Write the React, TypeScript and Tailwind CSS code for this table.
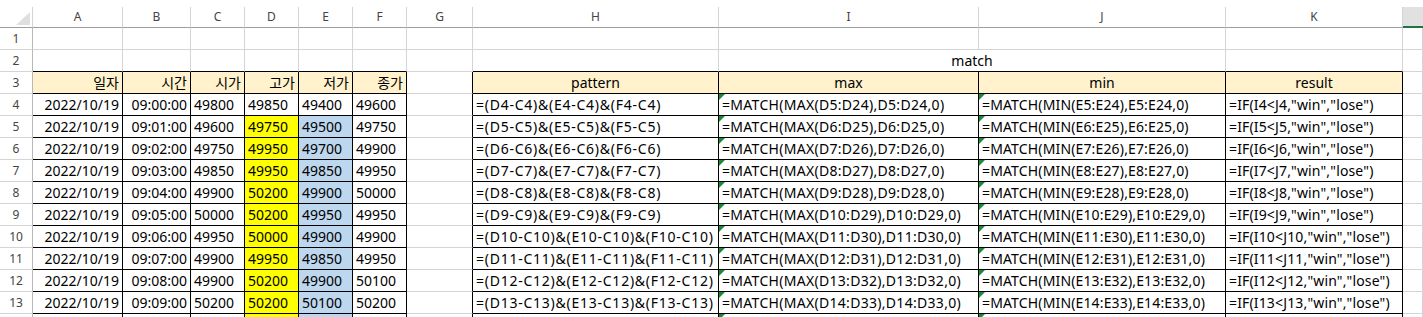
import React from "react";

const COLS = ["", "A", "B", "C", "D", "E", "F", "G", "H", "I", "J", "K", ""];

type Row = { d: string; t: string; o: string; h: string; l: string; c: string };
const data: Row[] = [
  { d: "2022/10/19", t: "09:00:00", o: "49800", h: "49850", l: "49400", c: "49600" },
  { d: "2022/10/19", t: "09:01:00", o: "49600", h: "49750", l: "49500", c: "49750" },
  { d: "2022/10/19", t: "09:02:00", o: "49750", h: "49950", l: "49700", c: "49900" },
  { d: "2022/10/19", t: "09:03:00", o: "49850", h: "49950", l: "49850", c: "49950" },
  { d: "2022/10/19", t: "09:04:00", o: "49900", h: "50200", l: "49900", c: "50000" },
  { d: "2022/10/19", t: "09:05:00", o: "50000", h: "50200", l: "49950", c: "49950" },
  { d: "2022/10/19", t: "09:06:00", o: "49950", h: "50000", l: "49900", c: "49900" },
  { d: "2022/10/19", t: "09:07:00", o: "49900", h: "49950", l: "49850", c: "49950" },
  { d: "2022/10/19", t: "09:08:00", o: "49900", h: "50200", l: "49900", c: "50100" },
  { d: "2022/10/19", t: "09:09:00", o: "50200", h: "50200", l: "50100", c: "50200" },
];

function inTable(r: number, c: number) {
  if (r < 3 || r > 15) return false;
  return (c >= 1 && c <= 6) || (c >= 8 && c <= 11);
}

type CellInfo = { text: string; align: "l" | "r" | "c"; fill: string; tri?: boolean };

function cellInfo(r: number, c: number): CellInfo {
  const empty: CellInfo = { text: "", align: "l", fill: "bg-white" };
  if (r === 3) {
    const heads: Record<number, string> = { 1: "일자", 2: "시간", 3: "시가", 4: "고가", 5: "저가", 6: "종가", 8: "pattern", 9: "max", 10: "min", 11: "result" };
    if (heads[c] !== undefined) return { text: heads[c], align: c <= 6 ? "r" : "c", fill: "bg-[#fff2cc]" };
    return empty;
  }
  if (r >= 4) {
    const d = data[r - 4];
    const yellow = c === 4 && r >= 5;
    const blue = c === 5 && r >= 5;
    const fill = yellow ? "bg-[#ffff00]" : blue ? "bg-[#bdd7ee]" : "bg-white";
    const tri = (c === 9 || c === 10) && r >= 4;
    if (!d) return { text: "", align: "l", fill, tri };
    switch (c) {
      case 1: return { text: d.d, align: "r", fill };
      case 2: return { text: d.t, align: "r", fill };
      case 3: return { text: d.o, align: "l", fill };
      case 4: return { text: d.h, align: "l", fill };
      case 5: return { text: d.l, align: "l", fill };
      case 6: return { text: d.c, align: "l", fill };
      case 8: return { text: `=(D${r}-C${r})&(E${r}-C${r})&(F${r}-C${r})`, align: "l", fill };
      case 9: return { text: `=MATCH(MAX(D${r + 1}:D${r + 20}),D${r + 1}:D${r + 20},0)`, align: "l", fill, tri };
      case 10: return { text: `=MATCH(MIN(E${r + 1}:E${r + 20}),E${r + 1}:E${r + 20},0)`, align: "l", fill, tri };
      case 11: return { text: `=IF(I${r}<J${r},"win","lose")`, align: "l", fill };
    }
    return { ...empty, fill };
  }
  return empty;
}

function trackingFor(r: number, c: number) {
  if (r < 4) return "";
  if (c === 8) return "tracking-[0.75px]";
  if (c === 9) return "tracking-[0.3px]";
  if (c === 10) return "tracking-[0.15px]";
  if (c === 11) return "tracking-[0.15px]";
  return "";
}

export default function App() {
  const rows = [1, 2, 3, 4, 5, 6, 7, 8, 9, 10, 11, 12, 13, 14];
  return (
    <div
      className="w-[1423px] h-[317px] overflow-hidden bg-white"
      style={{ fontFamily: '"Noto Sans", "Noto Sans CJK KR", sans-serif' }}
    >
      <div className="h-[7px] bg-white" />
      <div className="grid grid-cols-[33px_90px_68px_54px_54px_54px_54px_66px_246px_260px_247px_177px_20px] auto-rows-[22px] [grid-template-rows:21px]">
        {COLS.map((name, c) => {
          if (c === 0) {
            return (
              <div key={`h${c}`} className="relative h-[21px] border-r border-b border-r-[#d4d4d4] border-b-[#9e9e9e] bg-white">
                <svg className="absolute left-0 top-0" width="33" height="21" viewBox="0 0 33 21">
                  <polygon points="16,18 30,18 30,5" fill="#dfdfdf" />
                </svg>
              </div>
            );
          }
          if (c === 12) {
            return <div key={`h${c}`} className="h-[21px] border-b-2 border-b-[#217346] bg-[#e1e1e1]" />;
          }
          return (
            <div
              key={`h${c}`}
              className="h-[21px] flex items-center justify-center border-r border-b border-r-[#d4d4d4] border-b-[#9e9e9e] text-[12px] text-[#444] bg-white"
            >
              {name}
            </div>
          );
        })}
        {rows.map((r) =>
          Array.from({ length: 13 }).map((_, c) => {
            if (c === 0) {
              return (
                <div
                  key={`${r}-${c}`}
                  className="h-[22px] flex items-center justify-center border-r border-b border-r-[#b8b8b8] border-b-[#d4d4d4] text-[12px] text-[#444] bg-white"
                >
                  {r < 14 ? r : ""}
                </div>
              );
            }
            if (r === 2 && c === 10) return null;
            if (r === 2 && c === 9) {
              return (
                <div
                  key={`${r}-${c}`}
                  className="col-span-2 h-[22px] flex items-center justify-center border-r border-b border-r-[#d4d4d4] border-b-black text-[14px] text-black bg-white"
                >
                  match
                </div>
              );
            }
            const info = cellInfo(r, c);
            const rightBlack = inTable(r, c) || inTable(r, c + 1);
            const bottomBlack = inTable(r, c) || inTable(r + 1, c);
            const rb = rightBlack ? "border-r-black" : "border-r-[#d4d4d4]";
            const bb = bottomBlack ? "border-b-black" : "border-b-[#d4d4d4]";
            const al =
              info.align === "r" ? "justify-end pr-[3px]" : info.align === "c" ? "justify-center" : "justify-start pl-[3px]";
            return (
              <div
                key={`${r}-${c}`}
                className={`relative h-[22px] flex items-center overflow-hidden whitespace-nowrap border-r border-b ${rb} ${bb} ${al} ${info.fill} ${trackingFor(r, c)} text-[14px] text-black`}
              >
                {info.tri && (
                  <span className="absolute left-0 top-0 w-0 h-0 border-t-[6px] border-t-[#1a8a3a] border-r-[6px] border-r-transparent" />
                )}
                {info.text}
              </div>
            );
          })
        )}
      </div>
    </div>
  );
}
